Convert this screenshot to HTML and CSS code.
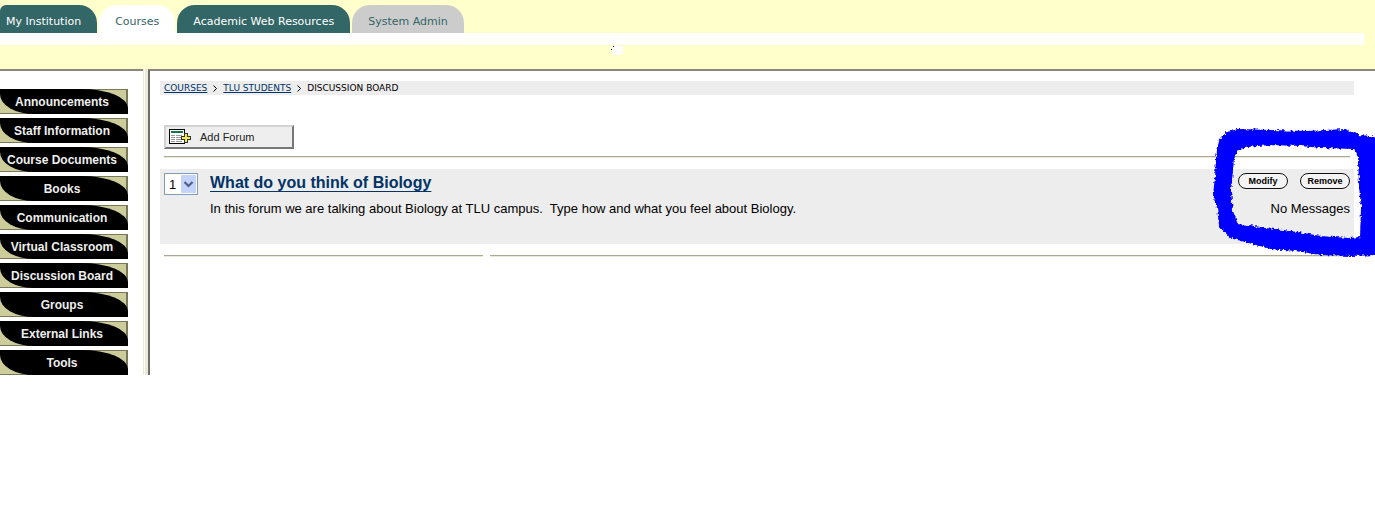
FILE: index.html
```
<!DOCTYPE html>
<html lang="en">
<head>
<meta charset="utf-8">
<title>Discussion Board</title>
<link rel="stylesheet" href="styles.css">
</head>
<body>
<header class="header">
  <nav class="tabs" aria-label="Main">
    <a class="tab tab-first" href="#">My Institution</a>
    <a class="tab tab-active" href="#">Courses</a>
    <a class="tab" href="#">Academic Web Resources</a>
    <a class="tab tab-admin" href="#">System Admin</a>
  </nav>
  <div class="strip"><svg class="smudge" width="14" height="10" aria-hidden="true"><path d="M3 1h10v8h-3v1H2V5h1z" fill="#fff"/><path d="M3 1h1v1H3zM1 4h1v1H1z" fill="#00a"/></svg></div>
</header>
<div class="frames">
  <nav class="sidebar" aria-label="Course">
    <a class="side-link" href="#"><span>Announcements</span></a>
    <a class="side-link" href="#"><span>Staff Information</span></a>
    <a class="side-link" href="#"><span>Course Documents</span></a>
    <a class="side-link" href="#"><span>Books</span></a>
    <a class="side-link" href="#"><span>Communication</span></a>
    <a class="side-link" href="#"><span>Virtual Classroom</span></a>
    <a class="side-link" href="#"><span>Discussion Board</span></a>
    <a class="side-link" href="#"><span>Groups</span></a>
    <a class="side-link" href="#"><span>External Links</span></a>
    <a class="side-link" href="#"><span>Tools</span></a>
  </nav>
  <div class="divider"></div>
  <main class="content">
    <nav class="crumbs" aria-label="Breadcrumb">
      <a href="#">COURSES</a><svg width="4" height="7" aria-hidden="true"><path d="M.5.5l3 3-3 3" fill="none" stroke="#000"/></svg><a href="#">TLU STUDENTS</a><svg width="4" height="7" aria-hidden="true"><path d="M.5.5l3 3-3 3" fill="none" stroke="#000"/></svg><span>DISCUSSION BOARD</span>
    </nav>
    <button class="add" type="button">
      <svg width="22" height="16" shape-rendering="crispEdges" aria-hidden="true">
        <path d="M.5.5h15v14H.5z" fill="#fff" stroke="#000"/>
        <path d="M2 2h12v2H2z" fill="#087a4c"/>
        <path d="M2 6h4M2 8h4M2 10h4M2 12h4M7 6h6M7 8h6M7 10h6M7 12h6" transform="translate(0 .5)" stroke="#999"/>
        <path d="M16 4h3v3h3v4h-3v3h-4v-3h-3V7h3V4z" fill="#333"/>
        <path d="M16 5h2v3h3v2h-3v3h-2v-3h-3V8h3z" fill="#f2ea55"/>
      </svg>
      <span>Add Forum</span>
    </button>
    <hr class="rule">
    <section class="forum">
      <div class="order">
        <select aria-label="Forum position"><option>1</option></select>
        <svg class="arrow" width="15" height="18" aria-hidden="true"><rect width="15" height="18" rx="1" fill="#c3d3fb"/><path d="M3.5 7l4 4 4-4" fill="none" stroke="#4d6185" stroke-width="2.2"/></svg>
      </div>
      <div class="topic">
        <h1><a href="#">What do you think of Biology</a></h1>
        <p>In this forum we are talking about Biology at TLU campus.&nbsp; Type how and what you feel about Biology.</p>
      </div>
      <div class="status">
        <div class="actions">
          <button class="pill" type="button">Modify</button>
          <button class="pill" type="button">Remove</button>
        </div>
        <p>No Messages</p>
      </div>
    </section>
    <hr class="rule rule-end">
    <svg class="scribble" width="164" height="132" aria-hidden="true">
      <filter id="rough" x="-5%" y="-5%" width="110%" height="110%"><feTurbulence type="fractalNoise" baseFrequency=".35" numOctaves="2" seed="4"/><feDisplacementMap in="SourceGraphic" scale="5" xChannelSelector="R" yChannelSelector="G"/></filter>
      <path filter="url(#rough)" fill="#00f" stroke="#00f" stroke-width="2" stroke-linejoin="round" fill-rule="evenodd" d="M9 14L16 6 27 3 60 4 95 5 134 3 148 9 170 11V127L140 128 110 127 85 123 60 121 38 115 20 110 9 99 7 80 3 68 5 50 6 30ZM22 32L26 23 36 19 60 17 90 18 110 20 144 21 148 30 149 60 151 80 150 111 138 112 110 110 80 105 55 102 38 99 26 98 21 84 19 65Z"/>
    </svg>
  </main>
</div>
</body>
</html>
```
FILE: styles.css
```
* { box-sizing: border-box; }
body { margin: 0; background: #fff; color: #000; font-family: "Liberation Sans", Arial, sans-serif; font-size: 13px; }
p, h1 { margin: 0; }
.header { background: #ffffcc; padding: 5px 0 24px; }
.tabs { display: flex; gap: 2px; }
.tab { height: 28px; padding: 0 16px; border-radius: 18px 18px 0 0; background: #336666; color: #fff; font: 11px/33px "DejaVu Sans", Verdana, sans-serif; text-decoration: none; white-space: nowrap; }
.tab-first { padding-left: 6px; border-top-left-radius: 6px; }
.tab-active { background: #fff; color: #336666; }
.tab-admin { background: #ccc; color: #336666; }
.strip { position: relative; height: 12px; margin-right: 11px; background: #fff; }
.smudge { position: absolute; left: 610px; top: 12px; }
.frames { display: flex; }
.sidebar { display: flex; flex-direction: column; gap: 4px; width: 143px; padding: 18px 15px 0 0; border-top: 2px solid #8a877c; }
.side-link { height: 25px; background: #cdcd9b; border-top: 1px solid #77775a; border-right: 2px solid #77775a; border-bottom: 1px solid #77775a; color: #eee; font-size: 12px; font-weight: bold; line-height: 26px; text-align: center; text-decoration: none; white-space: nowrap; }
.side-link span { display: block; height: 25px; margin: -1px -2px -1px 0; padding-right: 4px; background: #000; border-radius: 0 46px 0 34px / 0 19px 0 20px; }
.divider { width: 5px; background: #ece9d8; border-left: 1px solid #ece9d8; box-shadow: inset 1px 0 #fff; }
.content { position: relative; flex: 1; min-width: 0; padding: 10px 21px 0 10px; border-top: 2px solid #8a877c; border-left: 2px solid #716f64; }
.crumbs { display: flex; align-items: center; gap: 6px; height: 14px; padding: 0 4px; background: #ededed; font: 9px/14px "DejaVu Sans", Verdana, sans-serif; white-space: nowrap; }
.crumbs a, .topic a { color: #003366; }
.add { display: flex; align-items: center; gap: 9px; width: 130px; height: 24px; margin: 30px 4px 7px; padding: 0 3px; background: #eee; border: 2px solid; border-color: #d2d2d2 #777 #777 #d2d2d2; color: #222; font: 11px "Liberation Sans", Arial, sans-serif; }
.rule { height: 2px; margin: 0 4px; border: 0; border-top: 1px solid #aca899; background: #ece9d8; }
.rule-end { position: relative; overflow: visible; }
.rule-end::after { content: ""; position: absolute; left: 319px; top: -1px; width: 7px; height: 2px; background: #fff; }
.forum { display: flex; height: 75px; margin: 11px 0; padding: 4px; background: #ededed; }
.order { position: relative; width: 34px; height: 22px; }
.order select { width: 34px; height: 22px; padding: 0 4px; appearance: none; border: 1px solid #7f9db9; border-radius: 0; background: #fff; color: #000; font: 13px "Liberation Sans", Arial, sans-serif; }
.arrow { position: absolute; right: 2px; top: 2px; pointer-events: none; }
.topic { flex: 1; padding-left: 12px; }
.topic h1 { font-size: 16px; line-height: 20px; }
.topic a { text-underline-offset: 3px; }
.topic p, .status p { margin-top: 7px; line-height: 18px; }
.status { text-align: right; }
.actions { display: flex; justify-content: flex-end; gap: 12px; height: 20px; }
.pill { width: 50px; height: 16px; padding: 0; border: 1px solid #111; border-radius: 8px; background: #f4f4f4; color: #000; font: bold 9px/12px "Liberation Sans", Arial, sans-serif; }
.scribble { position: absolute; right: 0; top: 56px; pointer-events: none; }
```
